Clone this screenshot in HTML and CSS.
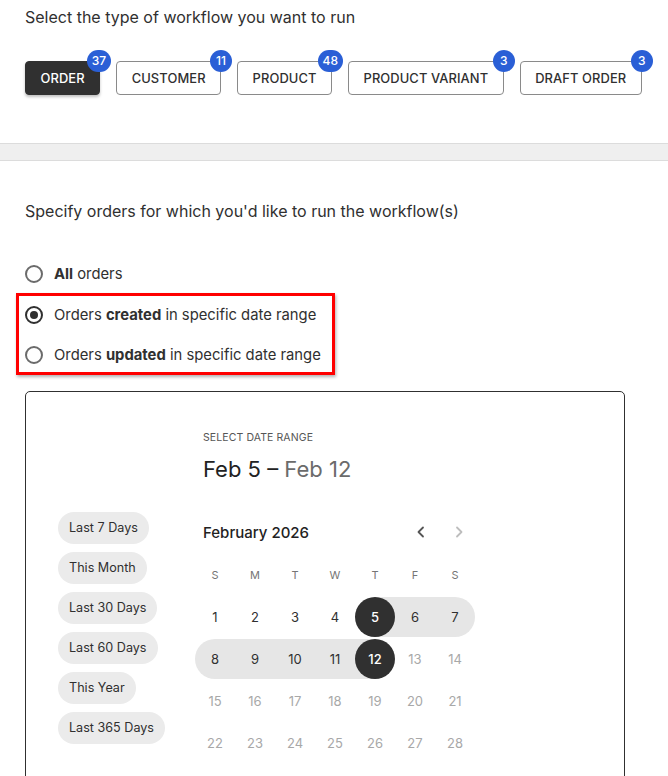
FILE: index.html
```html
<!DOCTYPE html>
<html>
<head>
<meta charset="utf-8">
<link rel="stylesheet" href="styles.css">
</head>
<body>
<section class="types">
  <h2 class="heading">Select the type of workflow you want to run</h2>
  <div class="type-row">
    <button class="type-btn active">Order<span class="badge">37</span></button>
    <button class="type-btn">Customer<span class="badge">11</span></button>
    <button class="type-btn">Product<span class="badge">48</span></button>
    <button class="type-btn">Product Variant<span class="badge">3</span></button>
    <button class="type-btn">Draft Order<span class="badge">3</span></button>
  </div>
</section>
<div class="band"></div>
<section class="orders">
  <h2 class="heading">Specify orders for which you'd like to run the workflow(s)</h2>
  <div class="radios">
    <label class="radio"><span class="dot"></span><span><b>All</b> orders</span></label>
    <div class="highlight">
      <label class="radio"><span class="dot checked"></span><span>Orders <b>created</b> in specific date range</span></label>
      <label class="radio"><span class="dot"></span><span>Orders <b>updated</b> in specific date range</span></label>
    </div>
  </div>
  <div class="card">
    <div class="card-grid">
      <div class="range-head">
        <div class="range-label">Select date range</div>
        <div class="range-value">Feb 5 – <span class="range-end">Feb 12</span></div>
      </div>
      <div class="presets">
        <span class="chip">Last 7 Days</span>
        <span class="chip">This Month</span>
        <span class="chip">Last 30 Days</span>
        <span class="chip">Last 60 Days</span>
        <span class="chip">This Year</span>
        <span class="chip">Last 365 Days</span>
      </div>
      <div class="calendar">
        <div class="cal-title">
          <span class="month">February 2026</span>
          <div class="nav">
            <span class="nav-btn"><svg width="14" height="14" viewBox="0 0 14 14"><path d="M9 2.5 L4.5 7 L9 11.5" fill="none" stroke="#555" stroke-width="1.8" stroke-linecap="round" stroke-linejoin="round"/></svg></span>
            <span class="nav-btn"><svg width="14" height="14" viewBox="0 0 14 14"><path d="M5 2.5 L9.5 7 L5 11.5" fill="none" stroke="#bdbdbd" stroke-width="1.8" stroke-linecap="round" stroke-linejoin="round"/></svg></span>
          </div>
        </div>
        <div class="cal-grid">
          <span class="wd">S</span><span class="wd">M</span><span class="wd">T</span><span class="wd">W</span><span class="wd">T</span><span class="wd">F</span><span class="wd">S</span>
          <span class="day"><i>1</i></span><span class="day"><i>2</i></span><span class="day"><i>3</i></span><span class="day"><i>4</i></span>
          <span class="day start"><i>5</i></span><span class="day inr"><i>6</i></span><span class="day inr row-end"><i>7</i></span>
          <span class="day inr row-start"><i>8</i></span><span class="day inr"><i>9</i></span><span class="day inr"><i>10</i></span><span class="day inr"><i>11</i></span>
          <span class="day end"><i>12</i></span><span class="day off"><i>13</i></span><span class="day off"><i>14</i></span>
          <span class="day off"><i>15</i></span><span class="day off"><i>16</i></span><span class="day off"><i>17</i></span><span class="day off"><i>18</i></span><span class="day off"><i>19</i></span><span class="day off"><i>20</i></span><span class="day off"><i>21</i></span>
          <span class="day off"><i>22</i></span><span class="day off"><i>23</i></span><span class="day off"><i>24</i></span><span class="day off"><i>25</i></span><span class="day off"><i>26</i></span><span class="day off"><i>27</i></span><span class="day off"><i>28</i></span>
        </div>
      </div>
    </div>
  </div>
</section>
</body>
</html>
```
FILE: styles.css
```css
* { box-sizing: border-box; }
html, body { margin: 0; padding: 0; background: #fff; }
body {
  font-family: Inter, "Noto Sans", sans-serif;
  color: #303030;
  width: 668px;
  height: 776px;
  overflow: hidden;
}
.heading {
  margin: 0;
  font-size: 16px;
  line-height: 20px;
  font-weight: 400;
  color: #303030;
}
.types {
  padding: 7px 25px 0;
  height: 143px;
}
.type-row {
  display: flex;
  gap: 16px;
  margin-top: 34px;
}
.type-btn {
  position: relative;
  flex: none;
  white-space: nowrap;
  height: 34px;
  padding: 0 14.5px;
  border: 1px solid #8a8a8a;
  border-radius: 4px;
  background: #fff;
  font-family: Inter, "Noto Sans", sans-serif;
  font-size: 12.9px;
  font-weight: 500;
  letter-spacing: 0.1px;
  text-transform: uppercase;
  color: #303030;
}
.type-btn.active {
  background: #303030;
  border-color: #303030;
  color: #fff;
  box-shadow: 0 2px 3px rgba(0,0,0,0.25);
}
.badge {
  position: absolute;
  top: -12px;
  right: -12px;
  min-width: 22px;
  height: 22px;
  padding: 0 5px;
  border-radius: 11px;
  background: #2a5fd6;
  color: #fff;
  font-size: 12px;
  font-weight: 500;
  line-height: 22px;
  text-align: center;
  letter-spacing: 0;
}
.band {
  height: 18px;
  background: #efefef;
  border-top: 1px solid #dcdcdc;
  border-bottom: 1px solid #dcdcdc;
}
.orders {
  padding: 40px 25px 0;
}
.radios {
  margin-top: 32px;
  display: flex;
  flex-direction: column;
  align-items: flex-start;
}
.radio {
  display: flex;
  align-items: center;
  gap: 11px;
  height: 40px;
  padding-top: 1px;
  font-size: 14.8px;
  color: #303030;
}
.radio b { font-weight: 700; }
.dot {
  width: 18px;
  height: 18px;
  border: 2px solid #6b6b6b;
  border-radius: 50%;
  display: flex;
  align-items: center;
  justify-content: center;
}
.dot.checked { border-color: #303030; }
.dot.checked::after {
  content: "";
  width: 8px;
  height: 8px;
  border-radius: 50%;
  background: #303030;
}
.highlight {
  display: flex;
  flex-direction: column;
  gap: 4px;
  margin-left: -9px;
  padding: 0 11px 0 6px;
  border: 3px solid #ff0000;
  box-shadow: 1px 2px 3px rgba(0,0,0,0.3);
}
.highlight .radio { height: 36px; }
.card {
  margin-top: 16px;
  width: 600px;
  height: 420px;
  border: 1px solid #303030;
  border-radius: 5px;
  padding: 39px 0 0 32px;
}
.card-grid {
  display: grid;
  grid-template-columns: 137px 280px;
  row-gap: 29px;
}
.range-head {
  grid-column: 2;
  padding-left: 8px;
}
.range-label {
  font-size: 10.5px;
  line-height: 14px;
  text-transform: uppercase;
  color: #555;
  letter-spacing: 0.1px;
}
.range-value {
  margin-top: 10px;
  font-size: 22px;
  line-height: 28px;
  color: #222;
}
.range-end { color: #6b6b6b; }
.presets {
  display: flex;
  flex-direction: column;
  align-items: flex-start;
  gap: 8px;
}
.chip {
  height: 32px;
  padding: 0 11px;
  border-radius: 16px;
  background: #ebebeb;
  font-size: 12.6px;
  line-height: 32px;
  color: #303030;
}
.cal-title {
  height: 40px;
  display: flex;
  align-items: center;
  justify-content: space-between;
  padding-left: 8px;
  margin-bottom: 3px;
}
.month {
  font-size: 15px;
  font-weight: 500;
  color: #222;
}
.nav { display: flex; gap: 6px; }
.nav-btn {
  width: 32px;
  height: 32px;
  display: flex;
  align-items: center;
  justify-content: center;
}
.cal-grid {
  display: grid;
  grid-template-columns: repeat(7, 40px);
  grid-auto-rows: 40px;
  row-gap: 2px;
}
.wd {
  display: flex;
  align-items: center;
  justify-content: center;
  font-size: 11px;
  color: #757575;
}
.day {
  display: flex;
  align-items: center;
  justify-content: center;
  font-size: 13px;
  color: #303030;
}
.day i {
  font-style: normal;
  width: 40px;
  height: 40px;
  border-radius: 50%;
  display: flex;
  align-items: center;
  justify-content: center;
}
.day.off { color: #a8a8a8; }
.day.inr { background: #e6e6e6; }
.day.row-end { border-radius: 0 20px 20px 0; }
.day.row-start { border-radius: 20px 0 0 20px; }
.day.start { background: linear-gradient(to right, transparent 50%, #e6e6e6 50%); }
.day.end { background: linear-gradient(to right, #e6e6e6 50%, transparent 50%); }
.day.start i, .day.end i {
  background: #303030;
  color: #fff;
  font-weight: 500;
}
```
